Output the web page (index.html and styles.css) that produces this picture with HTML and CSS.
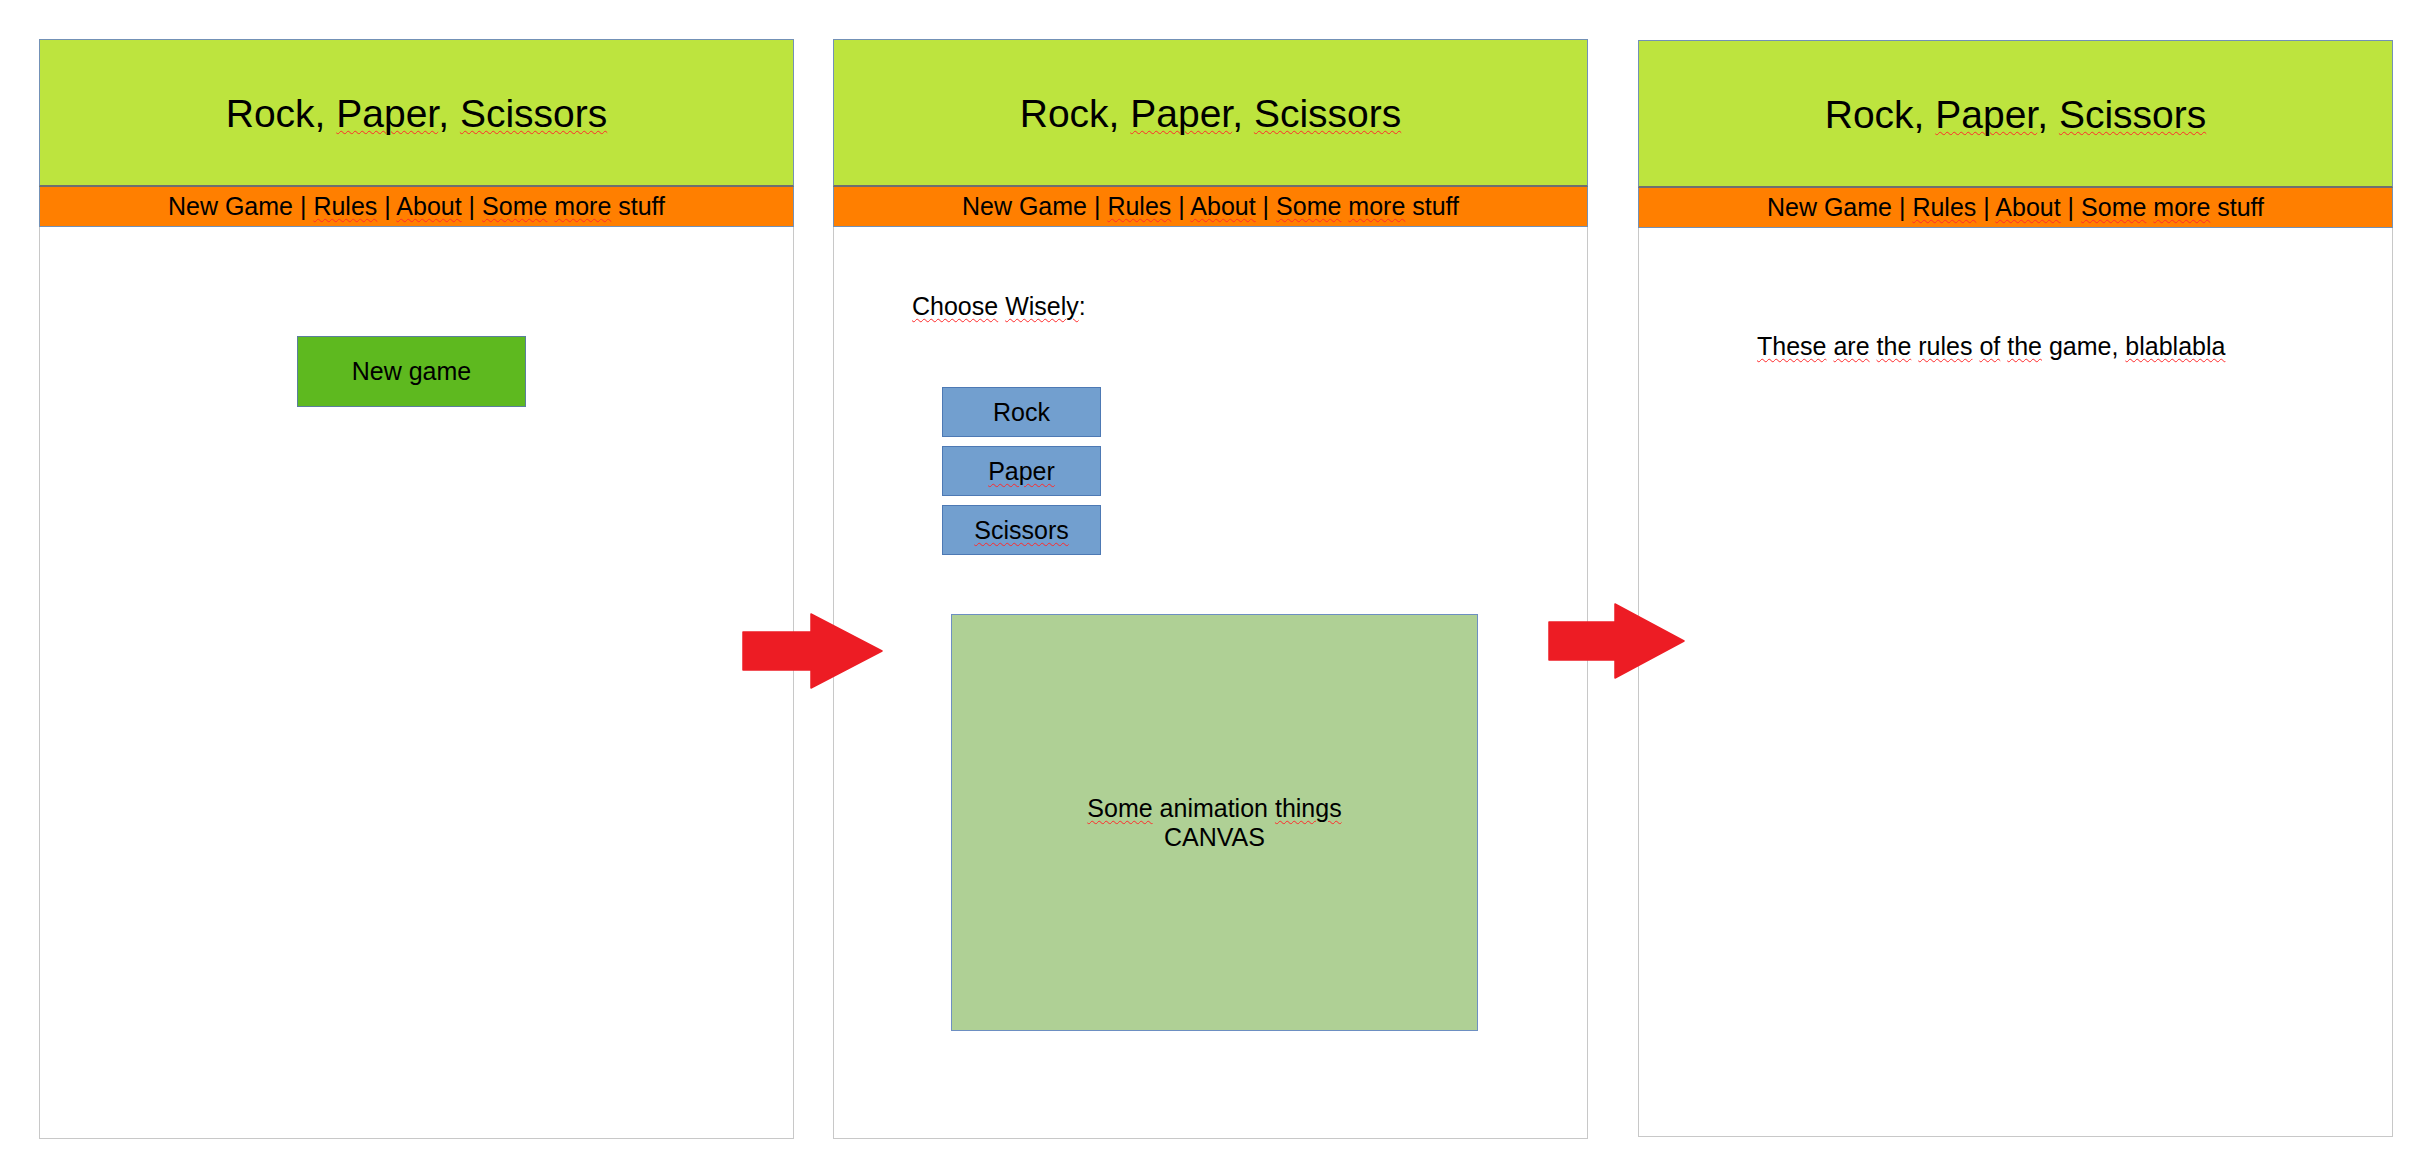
FILE: index.html
```html
<!DOCTYPE html>
<html lang="en">
<head>
<meta charset="utf-8">
<title>Rock, Paper, Scissors – mockup</title>
<link rel="stylesheet" href="styles.css">
</head>
<body>
<div class="board">
  <section class="panel">
    <header class="title"><h1 class="title-text">Rock, <span class="sp">Paper</span>, <span class="sp">Scissors</span></h1></header>
    <nav class="nav"><span class="nav-text">New Game | <span class="sp">Rules</span> | <span class="sp">About</span> | <span class="sp">Some</span> <span class="sp">more</span> stuff</span></nav>
    <div class="body body-start">
      <div class="btn-new"><span>New game</span></div>
    </div>
  </section>

  <section class="panel">
    <header class="title"><h1 class="title-text">Rock, <span class="sp">Paper</span>, <span class="sp">Scissors</span></h1></header>
    <nav class="nav"><span class="nav-text">New Game | <span class="sp">Rules</span> | <span class="sp">About</span> | <span class="sp">Some</span> <span class="sp">more</span> stuff</span></nav>
    <div class="body body-game">
      <p class="choose"><span class="sp">Choose</span> <span class="sp">Wisely</span>:</p>
      <div class="choices">
        <div class="choice"><span>Rock</span></div>
        <div class="choice"><span class="sp">Paper</span></div>
        <div class="choice"><span class="sp">Scissors</span></div>
      </div>
      <div class="canvas"><div class="canvas-text"><span class="sp">Some</span> animation <span class="sp">things</span><br>CANVAS</div></div>
    </div>
  </section>

  <section class="panel panel-last">
    <header class="title"><h1 class="title-text">Rock, <span class="sp">Paper</span>, <span class="sp">Scissors</span></h1></header>
    <nav class="nav"><span class="nav-text">New Game | <span class="sp">Rules</span> | <span class="sp">About</span> | <span class="sp">Some</span> <span class="sp">more</span> stuff</span></nav>
    <div class="body body-rules">
      <p class="rules"><span class="sp">These</span> <span class="sp">are</span> <span class="sp">the</span> <span class="sp">rules</span> <span class="sp">of</span> <span class="sp">the</span> game, <span class="sp">blablabla</span></p>
    </div>
  </section>

  <svg class="arrow arrow-1" width="141" height="76" viewBox="0 0 141 76" aria-hidden="true">
    <polygon points="1,19 69,19 69,1 140,38 69,75 69,57 1,57" fill="#ed1c24" stroke="#ed1c24" stroke-width="1.5" stroke-linejoin="round"/>
  </svg>
  <svg class="arrow arrow-2" width="137" height="76" viewBox="0 0 137 76" aria-hidden="true">
    <polygon points="1,19 67,19 67,1 136,38 67,75 67,57 1,57" fill="#ed1c24" stroke="#ed1c24" stroke-width="1.5" stroke-linejoin="round"/>
  </svg>
</div>
</body>
</html>
```

FILE: styles.css
```css
html, body {
  margin: 0;
  padding: 0;
  background: #ffffff;
}

body {
  font-family: "Liberation Sans", Arial, sans-serif;
  color: #000000;
}

.board {
  position: relative;
  display: flex;
  align-items: flex-start;
  gap: 39px;
  padding: 39px 0 0 39px;
}

.panel {
  width: 755px;
  height: 1100px;
  display: flex;
  flex-direction: column;
  flex: none;
}

.panel-last {
  margin-left: 11px;
  margin-top: 1px;
  height: 1097px;
}

.title {
  height: 148px;
  box-sizing: border-box;
  background: #bde43e;
  border: 1px solid #7391b6;
  border-bottom: 2px solid #6f6f6f;
  display: flex;
  align-items: center;
  justify-content: center;
  padding-top: 2px;
}

.title-text {
  margin: 0;
  font-size: 39px;
  font-weight: normal;
  white-space: nowrap;
}

.nav {
  height: 40px;
  box-sizing: border-box;
  background: #ff7f00;
  border: 1px solid #7391b6;
  border-top: none;
  display: flex;
  align-items: center;
  justify-content: center;
}

.nav-text {
  font-size: 25px;
  white-space: nowrap;
}

.sp {
  text-decoration: underline wavy #ff2a2a;
  text-decoration-thickness: 1px;
  text-underline-offset: 3px;
}

.body {
  flex: 1;
  border: 1px solid #c8c8c8;
  border-top: none;
  display: flex;
  flex-direction: column;
  align-items: flex-start;
}

/* Panel 1 */
.body-start {
  padding: 109px 0 0 257px;
}

.btn-new {
  width: 229px;
  height: 71px;
  box-sizing: border-box;
  background: #5eb91f;
  border: 1px solid #5a7f9c;
  display: flex;
  align-items: center;
  justify-content: center;
  font-size: 25px;
}

/* Panel 2 */
.body-game {
  padding: 65px 0 0 78px;
}

.choose {
  margin: 0;
  font-size: 25px;
  line-height: 28px;
}

.choices {
  display: flex;
  flex-direction: column;
  gap: 9px;
  margin: 67px 0 0 30px;
}

.choice {
  width: 159px;
  height: 50px;
  box-sizing: border-box;
  background: #729fcf;
  border: 1px solid #4d79b4;
  display: flex;
  align-items: center;
  justify-content: center;
  font-size: 25px;
}

.canvas {
  width: 527px;
  height: 417px;
  box-sizing: border-box;
  margin: 59px 0 0 39px;
  background: #afd095;
  border: 1px solid #6d8fc2;
  display: flex;
  align-items: center;
  justify-content: center;
}

.canvas-text {
  text-align: center;
  font-size: 25px;
  line-height: 29px;
}

/* Panel 3 */
.body-rules {
  padding: 104px 0 0 118px;
}

.rules {
  margin: 0;
  font-size: 25px;
  line-height: 28px;
}

/* Arrows overlaying the gaps between panels */
.arrow {
  position: absolute;
  display: block;
}

.arrow-1 {
  left: 742px;
  top: 613px;
}

.arrow-2 {
  left: 1548px;
  top: 603px;
}
```
